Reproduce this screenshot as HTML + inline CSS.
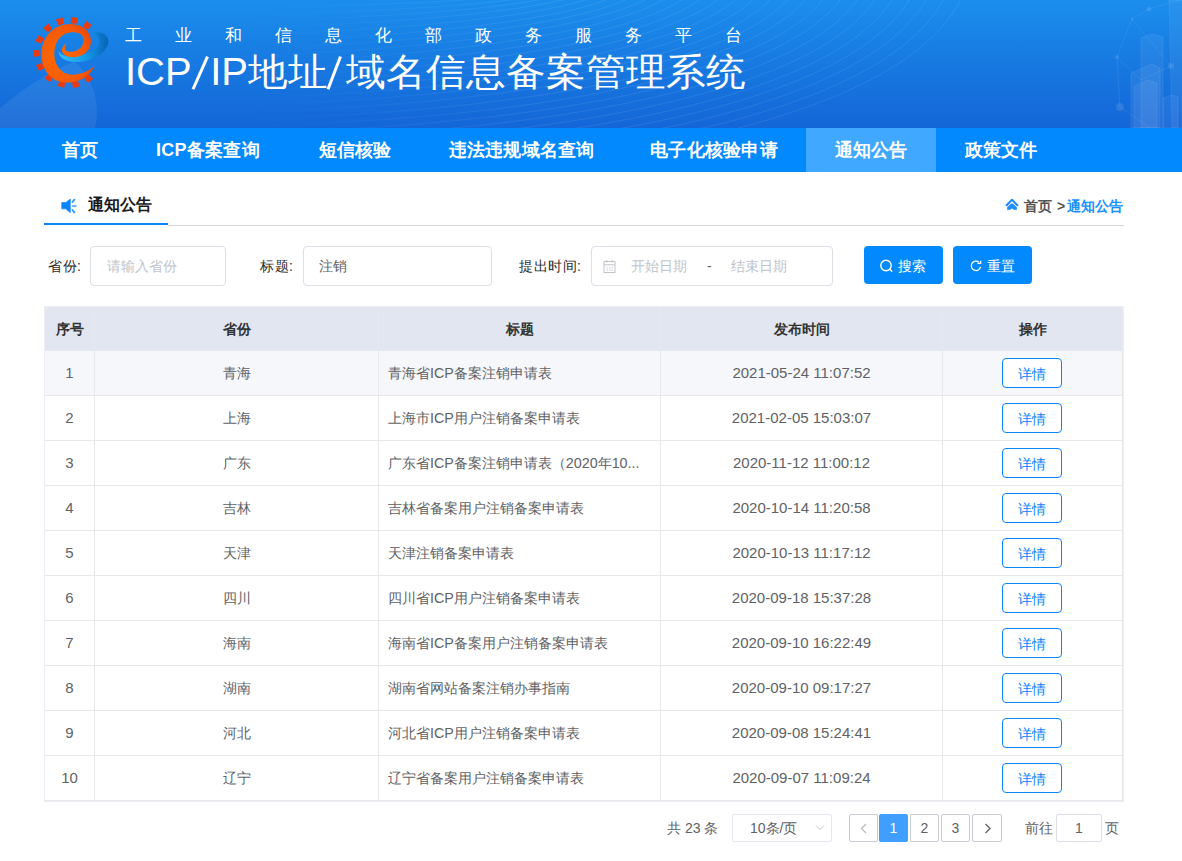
<!DOCTYPE html>
<html><head><meta charset="utf-8">
<style>
*{margin:0;padding:0;box-sizing:border-box}
html,body{width:1182px;height:861px;overflow:hidden;background:#fff;font-family:"Liberation Sans",sans-serif;color:#606266}
.abs{position:absolute}
#hdr{position:absolute;left:0;top:0;width:1182px;height:128px;background:linear-gradient(180deg,#1b8eed 0%,#1779e1 50%,#1466d7 100%);overflow:hidden}
#sub{position:absolute;left:125px;top:24px;font-size:17px;color:#fff;white-space:nowrap;letter-spacing:33px}
#ttl{position:absolute;left:125px;top:44px;font-size:40px;color:#fff;white-space:nowrap;line-height:56px;font-weight:500;transform:scaleY(0.96);transform-origin:0 27px}
#nav{position:absolute;left:0;top:128px;width:1182px;height:44px;background:#0289fe}
#nav span{position:absolute;top:0;height:44px;line-height:44px;font-size:18px;font-weight:bold;color:#fff;white-space:nowrap;letter-spacing:0.25px}
#nav .act{background:#40a9ff}
.sec{position:absolute;left:168px;top:225px;width:956px;height:1px;background:#d6d6d6}
.secb{position:absolute;left:44px;top:223px;width:124px;height:2px;background:#0a84ff}
.lbl{position:absolute;font-size:14px;color:#2a2a2a;white-space:nowrap;letter-spacing:0.5px;line-height:20px}
.inp{position:absolute;border:1px solid #dcdfe6;border-radius:4px;background:#fff}
.btn{position:absolute;background:#0289fe;border-radius:4px;color:#fff;font-size:14px}
#tbl{position:absolute;left:44px;top:306px;width:1080px;height:496px;border:1px solid #ebeef5}
table{border-collapse:separate;border-spacing:0;table-layout:fixed;width:1078px}
td,th{border-right:1px solid #e8e8e8;border-bottom:1px solid #e8e8e8;text-align:center;font-size:14px;color:#606266;white-space:nowrap;overflow:hidden;padding:0}
th{background:#e1e6f0;color:#333;font-weight:bold;height:44px;border-color:#e6e9f0}
td{height:45px;padding-top:2px}
th{padding-top:2px}
tr.hl td{background:#f5f7fa}
td.t{text-align:left;padding-left:9px}
.n{font-size:15px;position:relative;top:-2px}
.m{font-size:14.3px}
.dbtn{position:relative;top:-1px;left:-0.5px;display:inline-block;width:60px;height:30px;border:1px solid #0a84ff;border-radius:4px;color:#0a84ff;line-height:30px;font-size:14px;vertical-align:middle;background:#fff}
.pg{position:absolute;top:814px;height:28px;border:1px solid #dcdfe6;border-radius:2px;background:#fff;text-align:center;line-height:26px;font-size:14px;color:#606266}
.pb{border-color:#c8cbd2}
</style></head><body>
<div id="hdr">
<svg class="abs" style="left:0;top:0" width="1182" height="128" viewBox="0 0 1182 128">
<path d="M-20,128 C10,95 50,70 75,62 C95,80 100,105 95,128 Z" fill="#ffffff" fill-opacity="0.07"/>
<defs><linearGradient id="lg" gradientUnits="userSpaceOnUse" x1="250" y1="0" x2="520" y2="0"><stop offset="0" stop-color="#cfe8ff" stop-opacity="0"/><stop offset="1" stop-color="#cfe8ff" stop-opacity="0.11"/></linearGradient></defs>
<g fill="none" stroke="url(#lg)" stroke-width="0.9">
<path d="M150,8 C280,8 500,4 540,-10"/>
<path d="M150,15 C297,15 517,8 557,-10"/>
<path d="M150,22 C314,22 534,11 574,-10"/>
<path d="M150,29 C331,29 551,14 591,-10"/>
<path d="M150,36 C348,36 568,18 608,-10"/>
<path d="M150,43 C365,43 585,22 625,-10"/>
<path d="M150,50 C382,50 602,25 642,-10"/>
<path d="M150,57 C399,57 619,28 659,-10"/>
<path d="M150,64 C416,64 636,32 676,-10"/>
<path d="M150,71 C433,71 653,36 693,-10"/>
<path d="M150,78 C450,78 670,39 710,-10"/>
<path d="M150,85 C467,85 687,42 727,-10"/>
<path d="M150,92 C484,92 704,46 744,-10"/>
<path d="M150,99 C501,99 721,50 761,-10"/>
<path d="M150,106 C518,106 738,53 778,-10"/>
<path d="M150,113 C535,113 755,56 795,-10"/>
<path d="M150,120 C552,120 772,60 812,-10"/>
<path d="M150,127 C569,127 789,64 829,-10"/>
<path d="M150,134 C586,134 806,67 846,-10"/>
<path d="M150,141 C603,141 823,70 863,-10"/>
<path d="M150,148 C620,148 840,74 880,-10"/>
<path d="M150,155 C637,155 857,78 897,-10"/>
<path d="M150,162 C654,162 874,81 914,-10"/>
<path d="M150,169 C671,169 891,84 931,-10"/>
<path d="M150,176 C688,176 908,88 948,-10"/>
<path d="M150,183 C705,183 925,92 965,-10"/>
</g>
<g fill="#ffffff" fill-opacity="0.06" stroke="#ffffff" stroke-opacity="0.10" stroke-width="0.8">
<path d="M1169,0 H1183 V128 H1172 Z"/>
<path d="M1141,38 L1152,34 L1163,37 V128 H1141 Z"/>
<path d="M1131,73 L1152,64 L1160,68 V128 H1131 Z"/>
<path d="M1134,86 L1148,80 L1157,83 V128 H1134 Z"/>
<path d="M1163,98 L1172,95 L1178,97 V128 H1163 Z"/>
</g>
<g fill="#ffffff" fill-opacity="0.10">
<circle cx="1149" cy="9" r="2.5"/><circle cx="1132" cy="19" r="1.2"/><circle cx="1117" cy="57" r="2"/><circle cx="1120" cy="107" r="4"/><circle cx="1171" cy="66" r="3"/>
</g>
<g stroke="#ffffff" stroke-opacity="0.10" stroke-width="0.7" fill="none">
<path d="M1132,19 L1149,9 L1180,0 M1132,19 L1117,57 L1120,107 L1150,128 M1132,19 L1171,66 M1117,57 L1141,80 L1171,66"/>
</g>
</svg>
<svg class="abs" style="left:30px;top:12px" width="82" height="82" viewBox="0 0 861 861">
<defs>
<linearGradient id="sw" x1="0" y1="0" x2="1" y2="0"><stop offset="0" stop-color="#36c0f8"/><stop offset="0.55" stop-color="#129ae8"/><stop offset="1" stop-color="#0863b8"/></linearGradient>
<radialGradient id="eg" cx="0.35" cy="0.55" r="0.7"><stop offset="0" stop-color="#ff6a00"/><stop offset="0.7" stop-color="#f65a06"/><stop offset="1" stop-color="#e8440c"/></radialGradient>
</defs>
<g fill="#ea3a0e">
<polygon points="662,703 604,746 569,689 618,653"/>
<polygon points="521,783 450,797 443,731 502,719"/>
<polygon points="360,795 290,778 311,715 369,729"/>
<polygon points="208,738 152,693 198,645 245,683"/>
<polygon points="95,623 63,558 125,534 151,588"/>
<polygon points="41,470 39,398 105,402 107,462"/>
<polygon points="57,309 86,243 144,275 120,330"/>
<polygon points="139,170 193,122 232,176 187,215"/>
<polygon points="272,78 342,58 354,123 297,140"/>
<polygon points="432,52 503,63 487,127 428,118"/>
<polygon points="588,95 648,135 606,187 556,154"/>
</g>
<path fill="url(#sw)" d="M300,410 C300,510 450,550 600,512 C750,470 838,372 820,290 C804,220 722,203 640,210 C712,240 752,292 718,352 C660,432 520,470 420,468 C360,466 318,446 300,410 Z"/>
<path fill="url(#eg)" d="M680,565 C620,690 500,745 385,742 C225,738 118,610 120,440 C122,250 265,122 425,125 C560,128 648,210 640,320 C632,420 540,475 450,475 C380,475 330,440 335,395 C340,365 360,340 385,328 C362,360 362,395 385,410 C410,425 470,420 520,385 C560,355 572,300 555,260 C530,215 470,210 420,215 C320,225 255,320 255,440 C255,570 340,655 440,658 C540,660 630,610 680,565 Z"/>
</svg>
  <div id="sub">工业和信息化部政务服务平台</div>
  <div id="ttl">ICP<svg width="21.5" height="40" viewBox="0 0 21.5 40" style="display:inline-block;vertical-align:-7px;overflow:visible;margin-left:-3px"><line x1="4" y1="37" x2="18.5" y2="3" stroke="#fff" stroke-width="3"/></svg>IP地址<svg width="21" height="40" viewBox="0 0 21 40" style="display:inline-block;vertical-align:-7px;overflow:visible;margin-left:-3px"><line x1="3" y1="37" x2="15.5" y2="3" stroke="#fff" stroke-width="3"/></svg>域名信息备案管理系统</div>
</div>
<div id="nav">
  <span style="left:32.5px;padding:0 29px">首页</span>
  <span style="left:127px;padding:0 29px">ICP备案查询</span>
  <span style="left:289.5px;padding:0 29px">短信核验</span>
  <span style="left:419.5px;padding:0 29px">违法违规域名查询</span>
  <span style="left:621px;padding:0 29px">电子化核验申请</span>
  <span class="act" style="left:806px;width:130px;text-align:center">通知公告</span>
  <span style="left:935.5px;padding:0 29px">政策文件</span>
</div>
<svg class="abs" style="left:56px;top:194px" width="26" height="24" viewBox="0 0 26 24"><path d="M5.8,8.6 H9.8 L14.2,5.2 V18.6 L9.8,14.8 H5.8 Z" fill="#0a84ff" stroke="#0a84ff" stroke-width="0.8" stroke-linejoin="round"/><g stroke-linecap="round" stroke-width="1.8" stroke="#2b93ff"><line x1="16.4" y1="8.0" x2="18.4" y2="5.6"/><line x1="16.4" y1="16.0" x2="18.4" y2="18.4"/></g><line x1="16.8" y1="12" x2="19.8" y2="12" stroke="#6ab8ff" stroke-width="2" stroke-linecap="round"/></svg>
<div class="abs" style="left:88px;top:194px;font-size:16px;font-weight:bold;color:#1a1a1a;line-height:22px">通知公告</div>
<div class="sec"></div><div class="secb"></div>
<svg class="abs" style="left:1002px;top:195px" width="20" height="18" viewBox="0 0 20 18"><path d="M4.6,10.2 L10,4.8 L15.4,10.2" fill="none" stroke="#1a8cff" stroke-width="2" stroke-linecap="round" stroke-linejoin="round"/><path d="M5.4,14.6 V12.2 L10,8.4 L14.6,12.2 V14.6 H11.8 L10,13 L8.2,14.6 Z" fill="#1a8cff" stroke="#1a8cff" stroke-width="0.6" stroke-linejoin="round"/></svg>
<div class="abs" style="left:1024px;top:195px;font-size:14px;font-weight:bold;color:#555;white-space:nowrap;line-height:22px">首页</div>
<div class="abs" style="left:1057px;top:195px;font-size:14px;font-weight:bold;color:#555;white-space:nowrap;line-height:22px">&gt;</div>
<div class="abs" style="left:1067px;top:195px;font-size:14px;font-weight:bold;color:#1890ff;white-space:nowrap;line-height:22px">通知公告</div>

<div class="lbl" style="left:48px;top:256px">省份:</div>
<div class="inp" style="left:90px;top:246px;width:136px;height:40px"><span class="abs" style="left:16px;top:11px;font-size:14px;color:#c0c4cc">请输入省份</span></div>
<div class="lbl" style="left:260px;top:256px">标题:</div>
<div class="inp" style="left:303px;top:246px;width:189px;height:40px"><span class="abs" style="left:15px;top:11px;font-size:14px;color:#606266">注销</span></div>
<div class="lbl" style="left:519px;top:256px">提出时间:</div>
<div class="inp" style="left:591px;top:246px;width:242px;height:40px">
  <svg class="abs" style="left:9px;top:11px" width="16" height="16" viewBox="0 0 16 16"><g fill="none" stroke="#c0c4cc" stroke-width="1"><rect x="3" y="3.5" width="11" height="11"/><line x1="3" y1="6.8" x2="14" y2="6.8"/><line x1="5.8" y1="2" x2="5.8" y2="4.5"/><line x1="11.2" y1="2" x2="11.2" y2="4.5"/></g><g fill="#c9ccd3"><rect x="5.5" y="9.3" width="1.4" height="1.1"/><rect x="8" y="9.3" width="1.4" height="1.1"/><rect x="10.5" y="9.3" width="1.4" height="1.1"/><rect x="5.5" y="11.6" width="1.4" height="1.1"/><rect x="8" y="11.6" width="1.4" height="1.1"/><rect x="10.5" y="11.6" width="1.4" height="1.1"/></g></svg>
  <span class="abs" style="left:39px;top:11px;font-size:14px;color:#c0c4cc">开始日期</span>
  <span class="abs" style="left:115px;top:11px;font-size:14px;color:#606266">-</span>
  <span class="abs" style="left:139px;top:11px;font-size:14px;color:#c0c4cc">结束日期</span>
</div>
<div class="btn" style="left:864px;top:246px;width:79px;height:38px"><svg class="abs" style="left:14px;top:11px" width="16" height="16" viewBox="0 0 16 16"><circle cx="8" cy="8.5" r="5.2" fill="none" stroke="#fff" stroke-width="1.4"/><line x1="11.8" y1="12.3" x2="13.8" y2="14.3" stroke="#fff" stroke-width="1.4" stroke-linecap="round"/></svg><span class="abs" style="left:34px;top:12px;line-height:16px">搜索</span></div>
<div class="btn" style="left:953px;top:246px;width:79px;height:38px"><svg class="abs" style="left:15px;top:11px" width="16" height="16" viewBox="0 0 16 16"><path d="M12.6,9.8 A4.7,4.7 0 1 1 11.0,5.2" fill="none" stroke="#fff" stroke-width="1.3"/><path d="M9.4,6.4 H12.7 V3.8" fill="none" stroke="#fff" stroke-width="1.3"/></svg><span class="abs" style="left:34px;top:12px;line-height:16px">重置</span></div>

<div id="tbl"><table>
<colgroup><col style="width:50px"><col style="width:284px"><col style="width:282px"><col style="width:282px"><col style="width:180px"></colgroup>
<tr><th>序号</th><th>省份</th><th>标题</th><th>发布时间</th><th>操作</th></tr>
<tr class="hl"><td><span class="n">1</span></td><td>青海</td><td class="t">青海省<span class="m">ICP</span>备案注销申请表</td><td><span class="n">2021-05-24 11:07:52</span></td><td><span class="dbtn">详情</span></td></tr>
<tr><td><span class="n">2</span></td><td>上海</td><td class="t">上海市<span class="m">ICP</span>用户注销备案申请表</td><td><span class="n">2021-02-05 15:03:07</span></td><td><span class="dbtn">详情</span></td></tr>
<tr><td><span class="n">3</span></td><td>广东</td><td class="t">广东省<span class="m">ICP</span>备案注销申请表（<span class="m">2020</span>年<span class="m">10...</span></td><td><span class="n">2020-11-12 11:00:12</span></td><td><span class="dbtn">详情</span></td></tr>
<tr><td><span class="n">4</span></td><td>吉林</td><td class="t">吉林省备案用户注销备案申请表</td><td><span class="n">2020-10-14 11:20:58</span></td><td><span class="dbtn">详情</span></td></tr>
<tr><td><span class="n">5</span></td><td>天津</td><td class="t">天津注销备案申请表</td><td><span class="n">2020-10-13 11:17:12</span></td><td><span class="dbtn">详情</span></td></tr>
<tr><td><span class="n">6</span></td><td>四川</td><td class="t">四川省<span class="m">ICP</span>用户注销备案申请表</td><td><span class="n">2020-09-18 15:37:28</span></td><td><span class="dbtn">详情</span></td></tr>
<tr><td><span class="n">7</span></td><td>海南</td><td class="t">海南省<span class="m">ICP</span>备案用户注销备案申请表</td><td><span class="n">2020-09-10 16:22:49</span></td><td><span class="dbtn">详情</span></td></tr>
<tr><td><span class="n">8</span></td><td>湖南</td><td class="t">湖南省网站备案注销办事指南</td><td><span class="n">2020-09-10 09:17:27</span></td><td><span class="dbtn">详情</span></td></tr>
<tr><td><span class="n">9</span></td><td>河北</td><td class="t">河北省<span class="m">ICP</span>用户注销备案申请表</td><td><span class="n">2020-09-08 15:24:41</span></td><td><span class="dbtn">详情</span></td></tr>
<tr><td><span class="n">10</span></td><td>辽宁</td><td class="t">辽宁省备案用户注销备案申请表</td><td><span class="n">2020-09-07 11:09:24</span></td><td><span class="dbtn">详情</span></td></tr>
</table></div>

<div class="abs" style="left:667px;top:820px;font-size:14px;color:#606266;white-space:nowrap">共 23 条</div>
<div class="pg" style="left:732px;width:100px;text-align:left;padding-left:17px;border-color:#e4e7ed">10条/页<svg class="abs" style="left:82px;top:9px" width="10" height="8" viewBox="0 0 10 8"><path d="M1,1.5 L5,5.5 L9,1.5" fill="none" stroke="#c0c4cc" stroke-width="1"/></svg></div>
<div class="pg pb" style="left:849px;width:29px"><svg class="abs" style="left:9px;top:8px" width="10" height="11" viewBox="0 0 10 11"><path d="M7,1 L2.5,5.5 L7,10" fill="none" stroke="#b8bcc4" stroke-width="1.3"/></svg></div>
<div class="pg pb" style="left:879px;width:29px;background:#409eff;border-color:#409eff;color:#fff">1</div>
<div class="pg pb" style="left:910px;width:29px">2</div>
<div class="pg pb" style="left:941px;width:29px">3</div>
<div class="pg pb" style="left:972px;width:30px"><svg class="abs" style="left:10px;top:8px" width="10" height="11" viewBox="0 0 10 11"><path d="M2.5,1 L7,5.5 L2.5,10" fill="none" stroke="#606266" stroke-width="1.3"/></svg></div>
<div class="abs" style="left:1025px;top:820px;font-size:14px;color:#606266;white-space:nowrap">前往</div>
<div class="pg" style="left:1056px;width:46px">1</div>
<div class="abs" style="left:1105px;top:820px;font-size:14px;color:#606266;white-space:nowrap">页</div>
</body></html>
